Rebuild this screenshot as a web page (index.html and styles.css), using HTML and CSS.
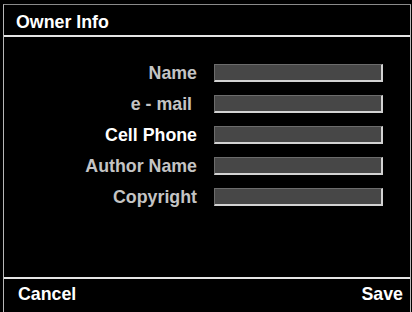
FILE: index.html
```html
<!DOCTYPE html>
<html>
<head>
<meta charset="utf-8">
<link rel="stylesheet" href="styles.css">
</head>
<body>
<div class="frame">
  <div class="header">Owner Info</div>
  <div class="sep"></div>
  <div class="main">
    <div class="row"><span class="label">Name</span><span class="field"></span></div>
    <div class="row"><span class="label">e - mail&nbsp;</span><span class="field"></span></div>
    <div class="row"><span class="label active">Cell Phone</span><span class="field"></span></div>
    <div class="row"><span class="label">Author Name</span><span class="field"></span></div>
    <div class="row"><span class="label">Copyright</span><span class="field"></span></div>
  </div>
  <div class="sep"></div>
  <div class="footer"><span>Cancel</span><span>Save</span></div>
</div>
</body>
</html>
```
FILE: styles.css
```css
html, body {
  margin: 0;
  padding: 0;
  background: #000;
}
body {
  width: 412px;
  height: 312px;
  overflow: hidden;
  font-family: "Liberation Sans", Arial, sans-serif;
  font-weight: bold;
  font-size: 17.8px;
  color: #fff;
}
.frame {
  box-sizing: border-box;
  margin: 4px 0 0 3px;
  width: 408px;
  height: 308px;
  border-top: 1px solid #8a8a8a;
  border-left: 1px solid #b8b8b8;
  border-right: 1px solid #b8b8b8;
  display: flex;
  flex-direction: column;
}
.header {
  flex: none;
  height: 30px;
  box-sizing: border-box;
  padding: 7px 0 0 12px;
  line-height: 20px;
}
.sep {
  flex: none;
  height: 2px;
  background: #e4e4e4;
}
.main {
  flex: none;
  height: 240px;
  box-sizing: border-box;
  padding-top: 27px;
  display: flex;
  flex-direction: column;
  gap: 13px;
}
.row {
  display: flex;
  align-items: center;
  height: 18px;
  line-height: 18px;
}
.label {
  width: 193px;
  text-align: right;
  color: #c4c4c4;
  white-space: nowrap;
}
.label.active {
  color: #fff;
}
.field {
  box-sizing: border-box;
  margin-left: 17px;
  width: 169px;
  height: 18px;
  background: #474747;
  border-top: 1px solid #6c6c6c;
  border-left: 1px solid #6c6c6c;
  border-bottom: 2px solid #d2d2d2;
  border-right: 2px solid #d2d2d2;
}
.footer {
  flex: 1;
  box-sizing: border-box;
  padding: 5px 7px 0 14px;
  line-height: 20px;
  display: flex;
  justify-content: space-between;
}
```
